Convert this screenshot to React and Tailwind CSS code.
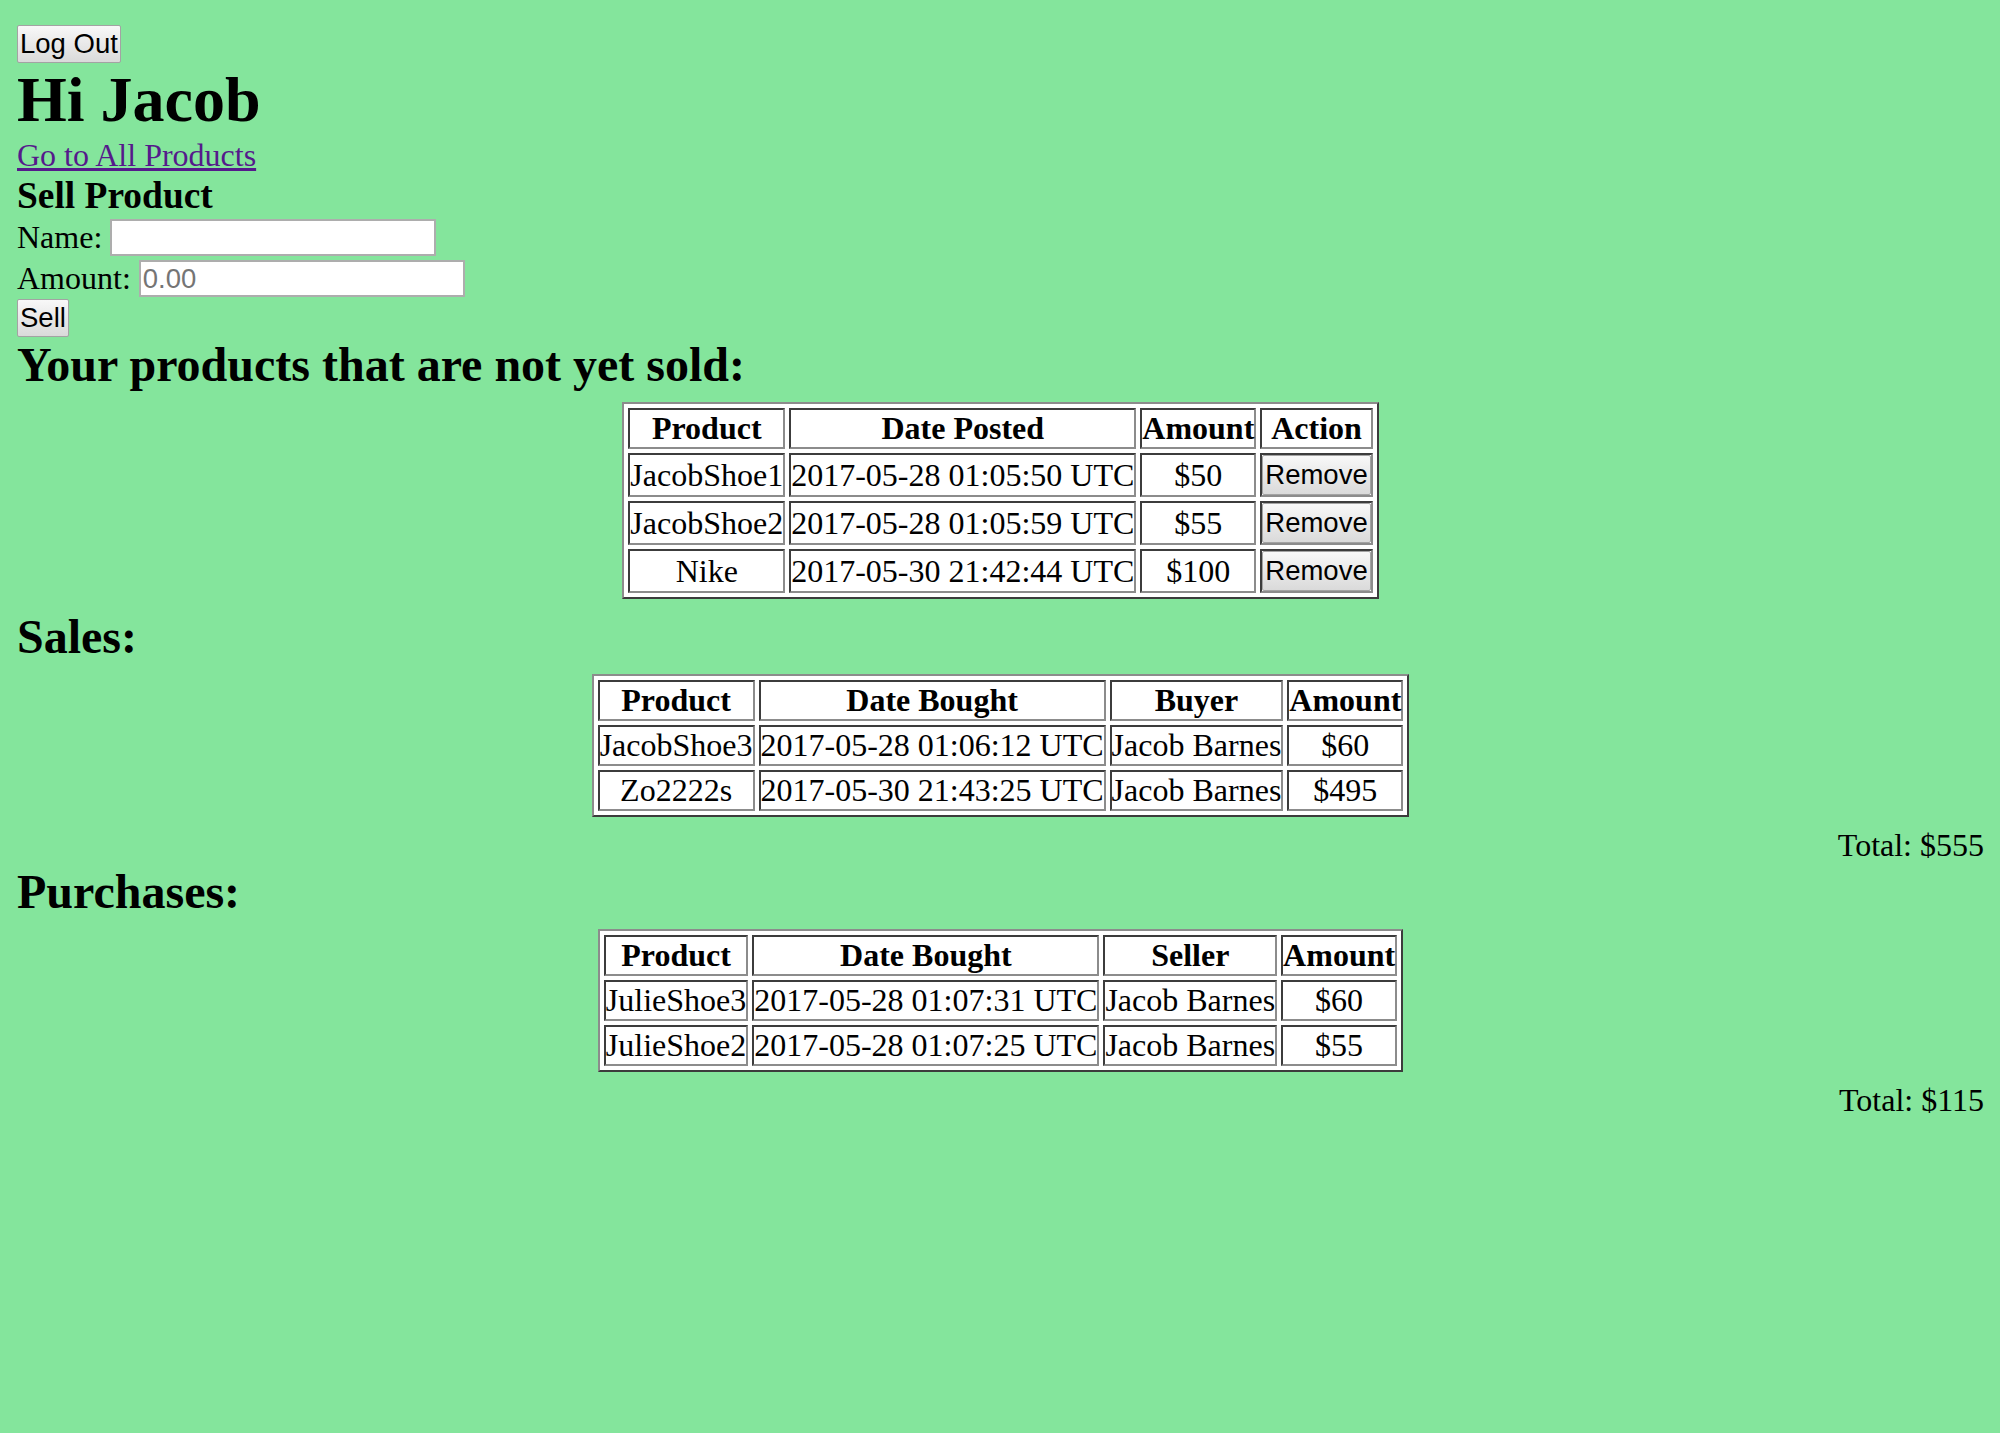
import React from "react";

// Old-school button look (light gradient, thin grey border)
const BTN =
  "bg-linear-to-b from-[#f8f8f8] to-[#dadada] border border-[#a3a3a3] rounded-[2px] px-[2px] font-['Liberation_Sans',Arial,sans-serif] text-[27.5px] leading-none text-black";

const CELL =
  "bg-white border-2 border-t-[#3c3c3c] border-l-[#3c3c3c] border-r-[#8c8c8c] border-b-[#8c8c8c] p-0 text-center whitespace-nowrap";

const UNSOLD = [
  { product: "JacobShoe1", date: "2017-05-28 01:05:50 UTC", amount: "$50" },
  { product: "JacobShoe2", date: "2017-05-28 01:05:59 UTC", amount: "$55" },
  { product: "Nike", date: "2017-05-30 21:42:44 UTC", amount: "$100" },
];

const SALES = [
  { product: "JacobShoe3", date: "2017-05-28 01:06:12 UTC", who: "Jacob Barnes", amount: "$60" },
  { product: "Zo2222s", date: "2017-05-30 21:43:25 UTC", who: "Jacob Barnes", amount: "$495" },
];

const PURCHASES = [
  { product: "JulieShoe3", date: "2017-05-28 01:07:31 UTC", who: "Jacob Barnes", amount: "$60" },
  { product: "JulieShoe2", date: "2017-05-28 01:07:25 UTC", who: "Jacob Barnes", amount: "$55" },
];

function DataTable({ headers, rows }) {
  return (
    <div className="my-[10px]">
      <table className="mx-auto border-separate border-spacing-[4px] bg-white border-2 border-t-[#8c8c8c] border-l-[#8c8c8c] border-r-[#3c3c3c] border-b-[#3c3c3c]">
        <thead>
          <tr>
            {headers.map((h) => (
              <th key={h} className={`${CELL} font-bold`}>
                {h}
              </th>
            ))}
          </tr>
        </thead>
        <tbody>
          {rows.map((row, idx) => (
            <tr key={idx}>
              {row.map((cell, j) => (
                <td key={j} className={CELL}>
                  {cell}
                </td>
              ))}
            </tr>
          ))}
        </tbody>
      </table>
    </div>
  );
}

function RemoveButton() {
  return <button className={`${BTN} h-[40px] block w-full`}>Remove</button>;
}

export default function App() {
  return (
    <div className="min-h-screen bg-[#84e59c] pl-[17px] pr-4 pt-[25px] pb-10 font-['Liberation_Serif','Times_New_Roman',serif] text-[32px] leading-[normal] text-black">
      <button className={`${BTN} block h-[38px]`}>Log Out</button>
      <h1 className="text-[64px] font-bold leading-[normal]">Hi Jacob</h1>
      <div>
        <a href="#" className="text-[#551a8b] underline">
          Go to All Products
        </a>
      </div>
      <h3 className="text-[37.44px] font-bold leading-[normal]">Sell Product</h3>
      <div className="flex items-center h-[41px]">
        <span>Name:</span>
        <input
          type="text"
          className="ml-2 h-[37px] w-[326px] bg-white border-2 border-[#adadad] px-[2px] font-['Liberation_Sans',Arial,sans-serif] text-[27.5px] outline-none"
        />
      </div>
      <div className="flex items-center h-[41px]">
        <span>Amount:</span>
        <input
          type="text"
          placeholder="0.00"
          className="ml-2 h-[37px] w-[326px] bg-white border-2 border-[#adadad] px-[2px] font-['Liberation_Sans',Arial,sans-serif] text-[27.5px] placeholder:text-[#757575] outline-none"
        />
      </div>
      <button className={`${BTN} block h-[38px]`}>Sell</button>

      <h2 className="text-[48px] font-bold leading-[normal]">Your products that are not yet sold:</h2>
      <DataTable
        headers={["Product", "Date Posted", "Amount", "Action"]}
        rows={UNSOLD.map((p) => [p.product, p.date, p.amount, <RemoveButton key="r" />])}
      />

      <h2 className="text-[48px] font-bold leading-[normal]">Sales:</h2>
      <DataTable
        headers={["Product", "Date Bought", "Buyer", "Amount"]}
        rows={SALES.map((s) => [s.product, s.date, s.who, s.amount])}
      />
      <div className="text-right">Total: $555</div>

      <h2 className="text-[48px] font-bold leading-[normal]">Purchases:</h2>
      <DataTable
        headers={["Product", "Date Bought", "Seller", "Amount"]}
        rows={PURCHASES.map((s) => [s.product, s.date, s.who, s.amount])}
      />
      <div className="text-right">Total: $115</div>
    </div>
  );
}
